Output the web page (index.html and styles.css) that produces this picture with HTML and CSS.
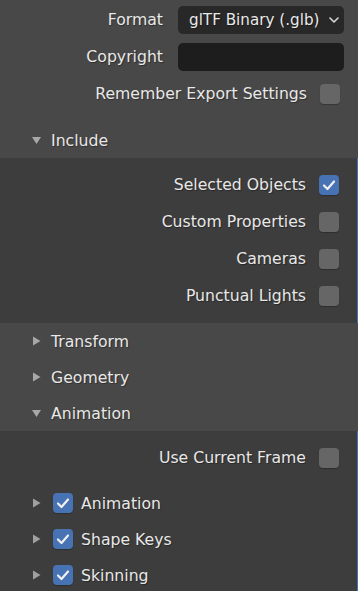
FILE: index.html
```html
<!DOCTYPE html>
<html lang="en">
<head>
    <meta charset="UTF-8">
    <title>glTF Export</title>
    <link rel="stylesheet" href="styles.css">
</head>
<body>
    <div class="props">
        <div class="field-row">
            <span class="label">Format</span>
            <div class="dropdown">
                <span>glTF Binary (.glb)</span>
                <svg class="chevron" width="10" height="6" viewBox="0 0 10 6"><path d="M1 1 L5 5 L9 1" fill="none" stroke="#d8d8d8" stroke-width="1.6" stroke-linecap="round" stroke-linejoin="round"/></svg>
            </div>
        </div>
        <div class="field-row">
            <span class="label">Copyright</span>
            <div class="text-input"></div>
        </div>
        <div class="check-row">
            <span class="label">Remember Export Settings</span>
            <span class="checkbox"></span>
        </div>
    </div>

    <div class="panel-header">
        <svg class="arrow" width="9" height="10" viewBox="0 0 9 10"><path d="M0 2 L9 2 L4.5 9 Z" fill="#a8a8a8"/></svg>
        <span>Include</span>
    </div>
    <div class="panel-body">
        <div class="check-row">
            <span class="label">Selected Objects</span>
            <span class="checkbox checked"><svg width="20" height="20" viewBox="0 0 20 20"><path d="M5 10.5 L8.5 14 L15 6.5" fill="none" stroke="#f0f0f0" stroke-width="2.2" stroke-linecap="round" stroke-linejoin="round"/></svg></span>
        </div>
        <div class="check-row">
            <span class="label">Custom Properties</span>
            <span class="checkbox"></span>
        </div>
        <div class="check-row">
            <span class="label">Cameras</span>
            <span class="checkbox"></span>
        </div>
        <div class="check-row">
            <span class="label">Punctual Lights</span>
            <span class="checkbox"></span>
        </div>
    </div>

    <div class="panel-header">
        <svg class="arrow" width="9" height="10" viewBox="0 0 9 10"><path d="M1 0.5 L8.5 5 L1 9.5 Z" fill="#a8a8a8"/></svg>
        <span>Transform</span>
    </div>
    <div class="panel-header">
        <svg class="arrow" width="9" height="10" viewBox="0 0 9 10"><path d="M1 0.5 L8.5 5 L1 9.5 Z" fill="#a8a8a8"/></svg>
        <span>Geometry</span>
    </div>
    <div class="panel-header">
        <svg class="arrow" width="9" height="10" viewBox="0 0 9 10"><path d="M0 2 L9 2 L4.5 9 Z" fill="#a8a8a8"/></svg>
        <span>Animation</span>
    </div>
    <div class="panel-body anim">
        <div class="check-row">
            <span class="label">Use Current Frame</span>
            <span class="checkbox"></span>
        </div>
        <div class="sub-panels">
            <div class="sub-row">
                <svg class="arrow" width="9" height="10" viewBox="0 0 9 10"><path d="M1 0.5 L8.5 5 L1 9.5 Z" fill="#a0a0a0"/></svg>
                <span class="checkbox checked"><svg width="20" height="20" viewBox="0 0 20 20"><path d="M5 10.5 L8.5 14 L15 6.5" fill="none" stroke="#f0f0f0" stroke-width="2.2" stroke-linecap="round" stroke-linejoin="round"/></svg></span>
                <span>Animation</span>
            </div>
            <div class="sub-row">
                <svg class="arrow" width="9" height="10" viewBox="0 0 9 10"><path d="M1 0.5 L8.5 5 L1 9.5 Z" fill="#a0a0a0"/></svg>
                <span class="checkbox checked"><svg width="20" height="20" viewBox="0 0 20 20"><path d="M5 10.5 L8.5 14 L15 6.5" fill="none" stroke="#f0f0f0" stroke-width="2.2" stroke-linecap="round" stroke-linejoin="round"/></svg></span>
                <span>Shape Keys</span>
            </div>
            <div class="sub-row">
                <svg class="arrow" width="9" height="10" viewBox="0 0 9 10"><path d="M1 0.5 L8.5 5 L1 9.5 Z" fill="#a0a0a0"/></svg>
                <span class="checkbox checked"><svg width="20" height="20" viewBox="0 0 20 20"><path d="M5 10.5 L8.5 14 L15 6.5" fill="none" stroke="#f0f0f0" stroke-width="2.2" stroke-linecap="round" stroke-linejoin="round"/></svg></span>
                <span>Skinning</span>
            </div>
        </div>
    </div>
</body>
</html>
```

FILE: styles.css
```css
body {
    margin: 0;
    width: 358px;
    height: 591px;
    overflow: hidden;
    background-color: #3d3d3d;
    font-family: "DejaVu Sans", sans-serif;
    font-size: 15.7px;
    color: #e8e8e8;
    text-shadow: 1px 1px 1px rgba(0,0,0,0.35);
}
.props {
    background-color: #484848;
    padding: 1px 0 10px 0;
}
.field-row {
    display: grid;
    grid-template-columns: 1fr 166px;
    column-gap: 15px;
    align-items: center;
    height: 37px;
    padding-right: 14px;
}
.field-row .label {
    text-align: right;
}
.dropdown {
    height: 28px;
    background-color: #282828;
    border-radius: 5px;
    display: flex;
    align-items: center;
    justify-content: space-between;
    padding: 0 5px 0 11px;
    font-size: 15.2px;
    white-space: nowrap;
}
.text-input {
    height: 28px;
    background-color: #1d1d1d;
    border-radius: 5px;
}
.check-row {
    display: flex;
    justify-content: flex-end;
    align-items: center;
    gap: 13px;
    height: 37px;
    padding-right: 18px;
}
.checkbox {
    width: 20px;
    height: 20px;
    border-radius: 4px;
    background-color: #666666;
    box-shadow: 0 1px 1px rgba(0,0,0,0.25);
    flex-shrink: 0;
}
.checkbox.checked {
    background-color: #4772b3;
}
.checkbox svg {
    display: block;
}
.panel-header {
    display: flex;
    align-items: center;
    height: 36px;
    padding-left: 32px;
    gap: 10px;
    background-color: #484848;
}
.panel-body {
    padding: 8px 0 9px 0;
    border-right: 1px solid #4772b3;
}
.panel-body.anim {
    padding-bottom: 0;
}
.sub-panels {
    padding-top: 9px;
}
.sub-row {
    display: flex;
    align-items: center;
    height: 36px;
    padding-left: 32px;
}
.sub-row .checkbox {
    margin-left: 12px;
    margin-right: 8px;
}
```
